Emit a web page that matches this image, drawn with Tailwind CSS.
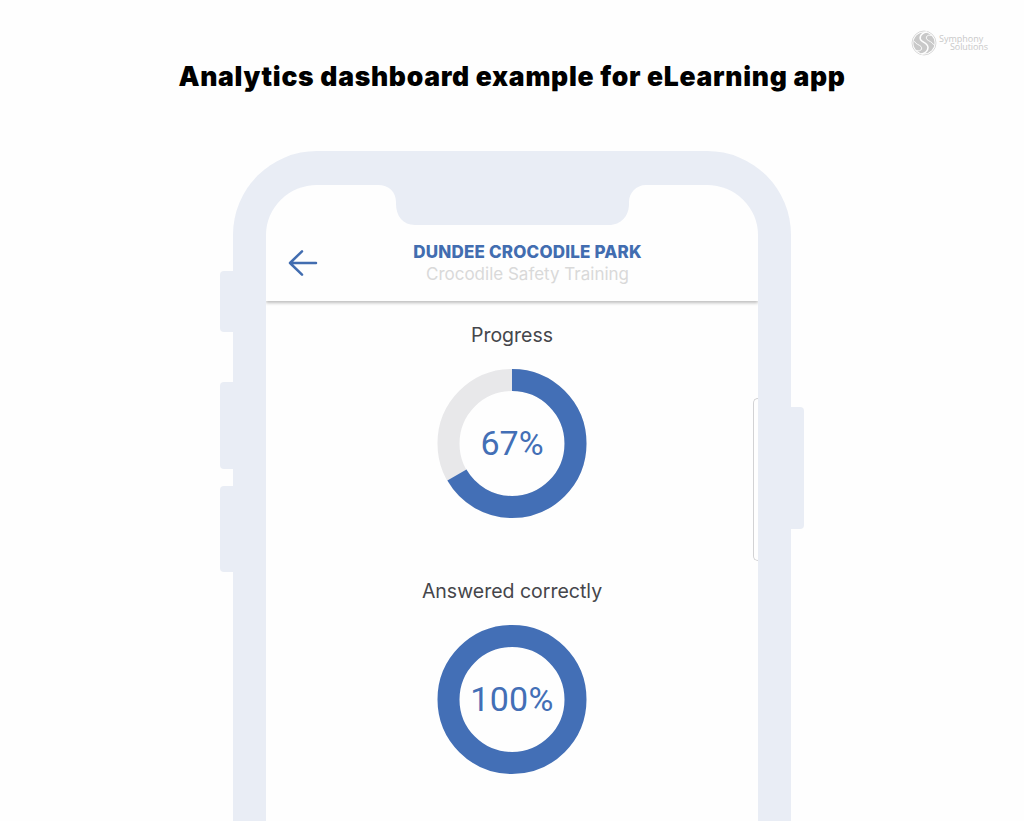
<!DOCTYPE html>
<html lang="en">
<head>
<meta charset="utf-8">
<title>Analytics dashboard example for eLearning app</title>
<script src="https://cdn.jsdelivr.net/npm/@tailwindcss/browser@4"></script>
</head>
<body class="bg-[#fefefe] font-['Inter',sans-serif]">
<div class="relative flex h-[821px] w-[1024px] flex-col overflow-hidden">
  <div class="absolute top-[30px] left-[911px] flex items-start gap-[2px] text-[#c9c9c9]">
    <svg class="size-[26px]" viewBox="0 0 26 26" fill="none">
      <circle cx="13" cy="13" r="12" stroke="currentColor" stroke-width=".7"/>
      <circle cx="13" cy="13" r="10.600" fill="currentColor"/>
      <g stroke="#fefefe" stroke-linecap="round">
        <path stroke-width="1.500" d="M15.500 2C9 3.500 7.500 8.500 11 11.200c3 2 6 2.800 6 6.300 0 3-2.500 5.300-6 6.500"/>
        <path stroke-width=".9" d="M20.500 5.500c-4-1.500-6.500 1.500-4.500 4 2 2 5 2 6.500 5"/>
        <path stroke-width=".9" d="M5.500 20.500c4 1.500 6.500-1.500 4.500-4-2-2-5-2-6.500-5"/>
      </g>
    </svg>
    <div class="flex flex-col font-['Open_Sans',sans-serif] text-[9px] whitespace-nowrap">
      <span class="mt-[3px] block h-[8px] leading-[12px]">Symphony</span>
      <span class="block h-[8px] pl-[11px] leading-[12px] tracking-[-0.1px]">Solutions</span>
    </div>
  </div>

  <h1 class="mt-[58px] h-9 text-center text-[26.500px] leading-9 font-black tracking-[0.700px] whitespace-nowrap text-black">Analytics dashboard example for eLearning app</h1>

  <div class="mt-[57px] flex justify-center">
    <div class="flex w-[13px] flex-col pt-[120px]">
      <div class="h-[61px] rounded-l bg-[#e9edf5]"></div>
      <div class="mt-[50px] h-[87px] rounded-l bg-[#e9edf5]"></div>
      <div class="mt-[17px] h-[86px] rounded-l bg-[#e9edf5]"></div>
    </div>

    <div class="flex h-[760px] w-[558px] flex-col rounded-t-[84px] border-x-[33px] border-t-[34px] border-[#e9edf5] bg-[#fefefe]">
      <div class="relative flex h-full flex-col">
        <svg class="mx-auto -mt-px block h-[41px] w-[268px] shrink-0" viewBox="0 0 268 41" fill="#e9edf5">
          <path d="M0 0H268V1C258 1 251 9 251 18V20C251 32 243 41 231 41H37C25 41 18 32 18 20V18C18 8 11 1 0 1Z"/>
        </svg>
        <header class="flex h-[76px] shrink-0 items-center shadow-[0_2px_3px_rgba(0,0,0,0.25)] [clip-path:inset(0_0_-8px_0)]">
          <svg class="-mt-px ml-[22px] size-[30px]" viewBox="0 0 30 30" fill="none" stroke="#426db0" stroke-width="2.500" stroke-linecap="round" stroke-linejoin="round">
            <path d="M28 15H2M14 3.300L2 15l12 11.700"/>
          </svg>
          <div class="flex flex-1 flex-col items-center pr-[21px] whitespace-nowrap">
            <div class="text-[17px] leading-[22px] font-extrabold tracking-[0.180px] text-[#426db0]">DUNDEE CROCODILE PARK</div>
            <div class="text-[17px] leading-[22px] text-[#d9d9d9]">Crocodile Safety Training</div>
          </div>
        </header>

        <section class="flex h-[256px] flex-col items-center pt-[20px]">
          <h2 class="text-[19.500px] leading-7 text-[#45464b]">Progress</h2>
          <div class="mt-[20px] grid size-[150px] place-items-center">
            <svg class="col-start-1 row-start-1 size-[150px]" viewBox="0 0 150 150" fill="none" stroke-width="22">
              <circle cx="75" cy="74.500" r="63.500" stroke="#e8e8ea"/>
              <circle cx="75" cy="74.500" r="63.500" stroke="#436fb6" pathLength="100" stroke-dasharray="66.700 33.300" transform="rotate(-90 75 74.500)"/>
            </svg>
            <span class="col-start-1 row-start-1 pb-[3px] font-['Roboto',sans-serif] text-[34px] leading-none text-[#436fb6]">67%</span>
          </div>
        </section>

        <section class="flex h-[256px] flex-col items-center pt-[20px]">
          <h2 class="text-[19.500px] leading-7 text-[#45464b]">Answered correctly</h2>
          <div class="mt-[20px] grid size-[150px] place-items-center">
            <svg class="col-start-1 row-start-1 size-[150px]" viewBox="0 0 150 150" fill="none" stroke-width="22">
              <circle cx="75" cy="74.500" r="63.500" stroke="#436fb6"/>
            </svg>
            <span class="col-start-1 row-start-1 pb-[3px] font-['Roboto',sans-serif] text-[34px] leading-none tracking-[0.300px] text-[#436fb6]">100%</span>
          </div>
        </section>
        <div class="absolute top-[213px] right-0 h-[163px] w-[5px] rounded-l-[5px] border border-r-0 border-[#d2d2d4]"></div>
      </div>
    </div>

    <div class="w-[13px] pt-[256px]">
      <div class="h-[122px] rounded-r bg-[#e9edf5]"></div>
    </div>
  </div>
</div>
</body>
</html>
